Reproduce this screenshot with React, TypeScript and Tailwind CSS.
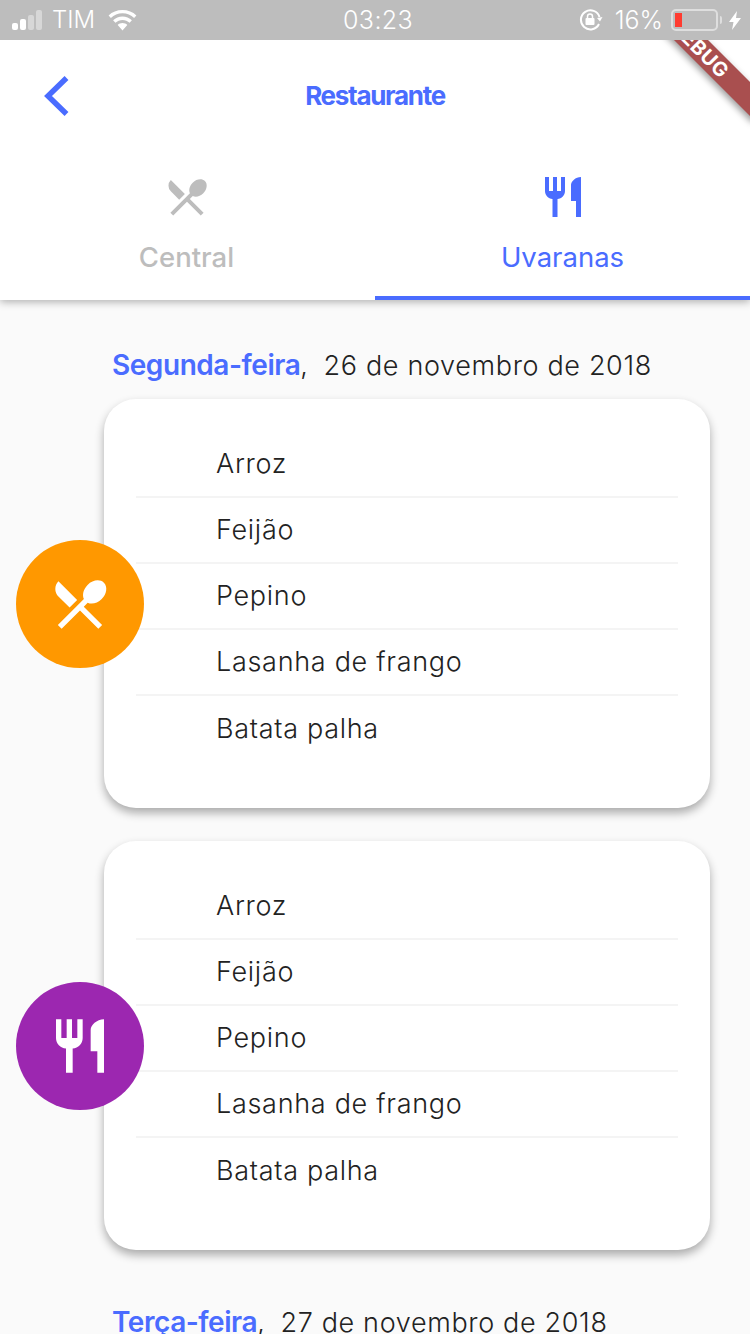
import type { ReactNode } from "react";
import { MdLocalDining, MdRestaurant } from "react-icons/md";

const meals = ["Arroz", "Feijão", "Pepino", "Lasanha de frango", "Batata palha"];

function StatusBar() {
  return (
    <div className="relative z-20 flex h-10 items-center justify-between bg-[#bdbdbd] pr-[9px] pl-3 font-light text-white">
      <div className="flex items-center">
        <div className="flex items-end gap-[2px]">
          <span className="h-[7px] w-[6px] rounded-[2px] bg-white" />
          <span className="h-[11px] w-[6px] rounded-[2px] bg-white" />
          <span className="h-[15px] w-[6px] rounded-[2px] bg-white/40" />
          <span className="h-[20px] w-[6px] rounded-[2px] bg-white/40" />
        </div>
        <span className="ml-[10px] text-[24px] leading-none">TIM</span>
        <svg className="ml-[13px]" width="29" height="21" viewBox="0 0 29 21" fill="white">
          <path d="M14.5 0C9 0 4.2 2 .6 5.4l2.3 2.5C5.9 5 10 3.3 14.5 3.3S23.1 5 26.1 7.9l2.3-2.5C24.8 2 20 0 14.5 0z" />
          <path d="M14.5 6.5c-3.6 0-6.9 1.4-9.4 3.7l2.3 2.5c1.9-1.7 4.4-2.8 7.1-2.8s5.2 1.1 7.1 2.8l2.3-2.5c-2.5-2.3-5.8-3.7-9.4-3.7z" />
          <path d="M14.5 13c-1.9 0-3.5.7-4.8 1.9l4.8 5.6 4.8-5.6c-1.3-1.2-2.9-1.9-4.8-1.9z" />
        </svg>
      </div>
      <span className="absolute left-[343px] text-[25px] leading-none tracking-[0.4px]">03:23</span>
      <div className="flex items-center">
        <svg width="24" height="22" viewBox="0 0 24 22" fill="none">
          <path d="M20.5 8A9.5 9.5 0 1 0 20 15" stroke="white" strokeWidth="2" />
          <path d="M18 9l5.5-1-2.5 4.5z" fill="white" />
          <rect x="6.5" y="9" width="9" height="7" rx="1" fill="white" />
          <path d="M8.5 9V7.5a2.5 2.5 0 0 1 5 0V9" stroke="white" strokeWidth="1.5" />
        </svg>
        <span className="ml-[12px] text-[25px] leading-none">16%</span>
        <div className="ml-[8px] flex h-[22px] w-[47px] items-center rounded-[5px] border-2 border-white/50 px-[2px]">
          <span className="h-[14px] w-[7px] bg-[#ff3b30]" />
        </div>
        <span className="ml-[2px] h-[8px] w-[2px] rounded-r-sm bg-white/50" />
        <svg className="ml-[7px]" width="12" height="19" viewBox="0 0 12 19" fill="white">
          <path d="M8 0L0 11h4.5L3 19l9-12H7z" />
        </svg>
      </div>
    </div>
  );
}

function DebugBanner() {
  return (
    <div className="pointer-events-none absolute top-[40px] right-0 z-10 h-[100px] w-[110px] overflow-hidden">
      <div className="absolute top-[-3px] left-[-30px] flex h-[24px] w-[180px] rotate-45 items-center justify-center bg-[#a94f4f] text-[20px] font-bold tracking-[0.5px] text-white shadow-[0_3px_7px_rgba(0,0,0,0.4)]">
        DEBUG
      </div>
    </div>
  );
}

function Header() {
  return (
    <header className="relative z-[5] bg-white shadow-[0_2px_8px_rgba(0,0,0,0.3)]">
      <div className="relative flex h-[110px] items-center justify-center pt-[1px]">
        <svg className="absolute top-[36px] left-[43px]" width="26" height="40" viewBox="0 0 26 40" fill="none">
          <path d="M23.5 2L5 20l18.5 18" stroke="#4a6cff" strokeWidth="5.5" />
        </svg>
        <h1 className="text-[26px] font-bold tracking-[-1.3px] text-[#4a6cff]">Restaurante</h1>
      </div>
      <div className="flex h-[150px]">
        <div className="flex w-1/2 flex-col items-center pt-[23px] pr-[2px] text-[#bdbdbd]">
          <MdLocalDining size={48} />
          <span className="mt-[20px] text-[27.5px] leading-8 font-medium">Central</span>
        </div>
        <div className="flex w-1/2 flex-col items-center border-b-4 border-[#4a6cff] pt-[23px] text-[#4a6cff]">
          <MdRestaurant size={48} />
          <span className="mt-[20px] text-[27.5px] leading-8">Uvaranas</span>
        </div>
      </div>
    </header>
  );
}

function MealCard({ icon, color }: { icon: ReactNode; color: string }) {
  return (
    <div className="relative ml-[104px] h-[409px] w-[606px] rounded-[32px] bg-white px-8 pt-[33px] shadow-[0_5px_10px_rgba(0,0,0,0.32)]">
      {meals.map((m, i) => (
        <div
          key={m}
          className={`flex h-[66px] items-center pl-[80px] text-[27px] font-light tracking-[0.7px] text-[#222222] ${
            i < meals.length - 1 ? "border-b-2 border-[#f4f4f4]" : ""
          }`}
        >
          {m}
        </div>
      ))}
      <div className={`absolute top-[141px] left-[-88px] flex h-32 w-32 items-center justify-center rounded-full text-white ${color}`}>
        {icon}
      </div>
    </div>
  );
}

function DateLine({ day, rest }: { day: string; rest: string }) {
  return (
    <p className="ml-[112px] text-[27px] leading-8 font-light tracking-[0.65px] text-[#222222]">
      <span className="text-[28px] font-semibold tracking-[-0.45px] text-[#4a6cff]">{day}</span>,
      <span className="ml-[15px]">{rest}</span>
    </p>
  );
}

export default function App() {
  return (
    <div className="relative h-[1334px] w-[750px] overflow-hidden bg-[#fafafa] font-['Inter',sans-serif]">
      <StatusBar />
      <DebugBanner />
      <Header />
      <main className="flex flex-col pt-[49px]">
        <DateLine day="Segunda-feira" rest="26 de novembro de 2018" />
        <div className="mt-[17px] flex flex-col gap-[33px]">
          <MealCard color="bg-[#ff9800]" icon={<MdLocalDining size={64} />} />
          <MealCard color="bg-[#9c27b0]" icon={<MdRestaurant size={64} />} />
        </div>
        <div className="mt-[56px]">
          <DateLine day="Terça-feira" rest="27 de novembro de 2018" />
        </div>
      </main>
    </div>
  );
}
